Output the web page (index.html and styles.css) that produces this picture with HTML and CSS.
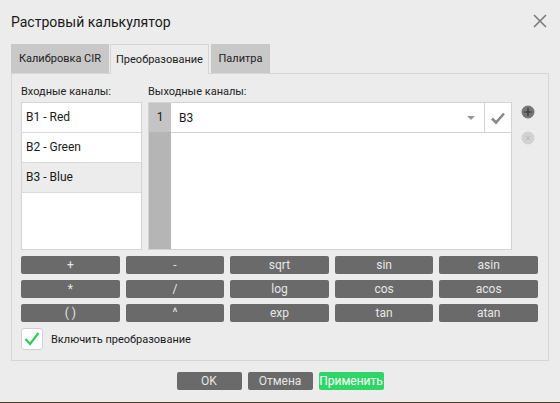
FILE: index.html
```html
<!DOCTYPE html>
<html lang="ru">
<head>
    <meta charset="UTF-8">
    <title>Растровый калькулятор</title>
    <link rel="stylesheet" href="styles.css">
</head>
<body>
    <div class="dialog">
        <div class="titlebar">
            <span class="title">Растровый калькулятор</span>
            <svg class="close" width="14" height="14" viewBox="0 0 14 14">
                <path d="M1 1 L13 13 M13 1 L1 13" stroke="#7a7a7a" stroke-width="1.6" fill="none"/>
            </svg>
        </div>

        <div class="tabs">
            <div class="tab tab-cir">Калибровка CIR</div>
            <div class="tab tab-active">Преобразование</div>
            <div class="tab tab-pal">Палитра</div>
        </div>

        <div class="panel">
            <div class="channels">
                <div class="col-in">
                    <div class="label">Входные каналы:</div>
                    <div class="list">
                        <div class="list-item">B1 - Red</div>
                        <div class="list-item">B2 - Green</div>
                        <div class="list-item selected">B3 - Blue</div>
                    </div>
                </div>
                <div class="col-out">
                    <div class="label">Выходные каналы:</div>
                    <div class="out-box">
                        <div class="gutter">
                            <div class="row-num">1</div>
                        </div>
                        <div class="rows">
                            <div class="out-row">
                                <div class="combo">
                                    <span>B3</span>
                                    <span class="arrow"></span>
                                </div>
                                <div class="apply-cell">
                                    <svg width="16" height="14" viewBox="0 0 16 14">
                                        <path d="M2 7.5 L6 11.5 L14 2.5" stroke="#8a8a8a" stroke-width="2.6" fill="none"/>
                                    </svg>
                                </div>
                            </div>
                        </div>
                    </div>
                </div>
                <div class="side-icons">
                    <svg width="14" height="14" viewBox="0 0 14 14">
                        <circle cx="7" cy="7" r="6.5" fill="#777"/>
                        <path d="M7 3 V11 M3 7 H11" stroke="#333" stroke-width="1.2"/>
                    </svg>
                    <svg width="14" height="14" viewBox="0 0 14 14">
                        <circle cx="7" cy="7" r="6.5" fill="#d2d2d2"/>
                        <path d="M5 5 L9 9 M9 5 L5 9" stroke="#b8b8b8" stroke-width="1"/>
                    </svg>
                </div>
            </div>

            <div class="ops">
                <button class="op">+</button>
                <button class="op">-</button>
                <button class="op">sqrt</button>
                <button class="op">sin</button>
                <button class="op">asin</button>
                <button class="op">*</button>
                <button class="op">/</button>
                <button class="op">log</button>
                <button class="op">cos</button>
                <button class="op">acos</button>
                <button class="op">( )</button>
                <button class="op">^</button>
                <button class="op">exp</button>
                <button class="op">tan</button>
                <button class="op">atan</button>
            </div>

            <div class="check-row">
                <span class="checkbox">
                    <svg width="16" height="14" viewBox="0 0 16 14">
                        <path d="M1.5 7 L6 12 L14.5 1" stroke="#2ecc5f" stroke-width="2.2" fill="none"/>
                    </svg>
                </span>
                <span>Включить преобразование</span>
            </div>
        </div>

        <div class="footer">
            <button class="btn">OK</button>
            <button class="btn">Отмена</button>
            <button class="btn btn-apply">Применить</button>
        </div>
    </div>
    <div class="desktop"></div>
</body>
</html>
```

FILE: styles.css
```css
body {
    width: 560px;
    height: 403px;
    margin: 0;
    padding: 0;
    overflow: hidden;
    font-family: Roboto, "Noto Sans", sans-serif;
    background: #ececec;
    color: #1a1a1a;
}

.dialog {
    height: 402px;
    background: #ececec;
}

.desktop {
    height: 1px;
    background: #4a3a2c;
}

.titlebar {
    height: 44px;
    display: flex;
    align-items: center;
    justify-content: space-between;
    padding: 0 13px 0 11px;
}

.title {
    font-size: 14px;
    margin-top: -1px;
}

.close {
    margin-top: -2px;
}

.tabs {
    display: flex;
    margin-left: 11px;
    height: 29px;
}

.tab {
    display: flex;
    align-items: center;
    justify-content: center;
    white-space: nowrap;
    font-size: 11px;
    background: #c8c8c8;
    color: #222;
}

.tab-cir { width: 98px; margin-right: 1px; }
.tab-pal { width: 59px; margin-left: 2px; }

.tab-active {
    width: 97px;
    background: #ececec;
    border: 1px solid #d6d6d6;
    border-bottom: none;
    margin-bottom: -1px;
    position: relative;
    z-index: 1;
}

.panel {
    margin: 0 11px 0 11px;
    height: 277px;
    border: 1px solid #d6d6d6;
    padding: 9px 9px 0 9px;
}

.channels {
    display: flex;
    height: 168px;
}

.label {
    font-size: 11px;
    height: 19px;
    line-height: 18px;
    color: #222;
}

.col-in {
    width: 121px;
}

.list {
    height: 146px;
    background: #fff;
    border: 1px solid #d4d4d4;
}

.list-item {
    height: 29px;
    line-height: 28px;
    padding-left: 4px;
    font-size: 12px;
    border-bottom: 1px solid #dcdcdc;
}

.list-item.selected {
    background: #ececec;
}

.col-out {
    width: 364px;
    margin-left: 6px;
}

.out-box {
    display: flex;
    height: 146px;
    background: #fff;
    border: 1px solid #d2d2d2;
}

.gutter {
    width: 22px;
    background: #b5b5b5;
}

.row-num {
    height: 29px;
    line-height: 28px;
    text-align: center;
    font-size: 12px;
    background: #c4c4c4;
}

.rows {
    flex: 1;
}

.out-row {
    display: flex;
    height: 29px;
    border-bottom: 1px solid #d2d2d2;
}

.combo {
    flex: 1;
    display: flex;
    align-items: center;
    justify-content: space-between;
    padding: 0 9px 0 6px;
    font-size: 12px;
    border-right: 1px solid #d2d2d2;
    border-left: 2px solid #fff;
}

.arrow {
    width: 0;
    height: 0;
    border-left: 4px solid transparent;
    border-right: 4px solid transparent;
    border-top: 4px solid #999;
}

.apply-cell {
    width: 26px;
    display: flex;
    align-items: center;
    justify-content: center;
}

.side-icons {
    display: flex;
    flex-direction: column;
    gap: 12px;
    padding: 22px 0 0 9px;
}

.ops {
    display: grid;
    grid-template-columns: repeat(5, 1fr);
    gap: 6px;
    margin-top: 5px;
    width: 517px;
}

button {
    border: none;
    border-radius: 2px;
    font-family: Roboto, "Noto Sans", sans-serif;
    font-size: 12px;
    color: #e6e6e6;
    background: #6a6a6a;
    padding: 0;
    cursor: pointer;
}

.op {
    height: 18px;
    line-height: 17px;
}

.check-row {
    display: flex;
    align-items: center;
    gap: 8px;
    margin-top: 6px;
    font-size: 11px;
}

.checkbox {
    width: 20px;
    height: 20px;
    background: #fff;
    border: 1px solid #d0d0d0;
    border-radius: 3px;
    display: flex;
    align-items: center;
    justify-content: center;
}

.footer {
    display: flex;
    justify-content: center;
    gap: 6px;
    padding-top: 11px;
}

.btn {
    width: 65px;
    height: 18px;
    font-size: 12px;
    line-height: 17px;
}

.btn-apply {
    background: #2fd566;
    color: #fff;
}
```
